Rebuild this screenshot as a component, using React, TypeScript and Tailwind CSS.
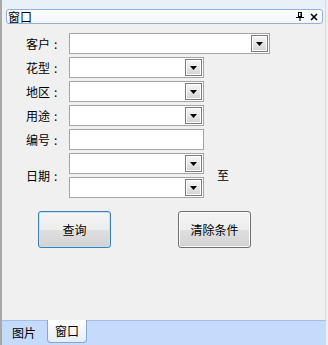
import React from "react";

const FONT = "font-['Noto_Sans_CJK_SC','Noto_Sans',sans-serif]";

function Arrow() {
  return (
    <div className="w-[17px] h-full border border-[#7c7c7c] shadow-[inset_0_0_0_1px_#ffffff] bg-[linear-gradient(180deg,#f7f7f7_0%,#e6e6e6_50%,#d3d3d3_100%)] flex items-center justify-center">
      <svg width="7" height="4" viewBox="0 0 7 4" className="mt-[1px]">
        <path d="M0 0H7L3.5 4Z" fill="#000" />
      </svg>
    </div>
  );
}

function Combo({ className, arrow = true }: { className: string; arrow?: boolean }) {
  return (
    <div className={`h-[21px] border border-[#a5a5a5] bg-white p-[1px] flex justify-end ${className}`}>
      {arrow && <Arrow />}
    </div>
  );
}

function Label({ text }: { text: string }) {
  return (
    <div className="w-[43px] pl-[24px] box-content text-[12px] leading-[14px] text-black whitespace-nowrap">
      {text}
      <span className="ml-[4px]">:</span>
    </div>
  );
}

function Row({ label, children }: { label: string; children: React.ReactNode }) {
  return (
    <div className="flex items-center">
      <Label text={label} />
      {children}
    </div>
  );
}

export default function App() {
  return (
    <div className={`w-[328px] h-[345px] flex flex-col bg-[#f0f0f0] border-l-2 border-[#a8a8a8] ${FONT}`}>
      <div className="flex-1 flex flex-col border-r border-[#d8d8d8] mr-[2px]">
        <div className="h-[9px] bg-[#eaf0f8]" />
        <div className="h-[15px] ml-[4px] mr-[2px] border border-[#8fb1dc] rounded-[3px] bg-[linear-gradient(180deg,#ffffff_0%,#f1f6fc_100%)] flex items-center pl-[1px] pr-[4px]">
          <span className="text-[12px] leading-[13px] text-black">窗口</span>
          <div className="flex-1" />
          <svg width="8" height="9" viewBox="0 0 8 9" className="mr-[6px]">
            <rect x="2.5" y="0.5" width="3" height="4" fill="none" stroke="#000" />
            <rect x="4.5" y="0" width="1.5" height="5" fill="#000" />
            <rect x="0" y="5" width="8" height="1" fill="#000" />
            <rect x="3.5" y="6" width="1" height="3" fill="#000" />
          </svg>
          <svg width="8" height="8" viewBox="0 0 8 8">
            <path d="M1 1L7 7M7 1L1 7" stroke="#000" strokeWidth="1.6" />
          </svg>
        </div>
        <div className="flex flex-col gap-[3px] pt-[9px]">
          <Row label="客户">
            <Combo className="w-[201px]" />
          </Row>
          <Row label="花型">
            <Combo className="w-[135px]" />
          </Row>
          <Row label="地区">
            <Combo className="w-[135px]" />
          </Row>
          <Row label="用途">
            <Combo className="w-[135px]" />
          </Row>
          <Row label="编号">
            <Combo className="w-[135px]" arrow={false} />
          </Row>
          <Row label="日期">
            <div className="flex flex-col gap-[3px]">
              <Combo className="w-[135px]" />
              <Combo className="w-[135px]" />
            </div>
            <span className="ml-[13px] text-[12px] leading-[14px] text-black -mt-[2px]">至</span>
          </Row>
        </div>
        <div className="flex pl-[36px] pt-[13px] gap-[67px]">
          <button className="w-[73px] h-[37px] rounded-[3px] border border-[#3c7fb1] shadow-[inset_0_0_0_1px_#bfe4fa] bg-[linear-gradient(180deg,#f4f4f4_0%,#ededed_50%,#e0e0e0_51%,#d2d2d2_100%)] text-[12px] text-black">
            查询
          </button>
          <button className="w-[73px] h-[37px] rounded-[3px] border border-[#707070] shadow-[inset_0_0_0_1px_#fbfbfb] bg-[linear-gradient(180deg,#f4f4f4_0%,#ededed_50%,#e0e0e0_51%,#d2d2d2_100%)] text-[12px] text-black">
            清除条件
          </button>
        </div>
      </div>
      <div className="h-[25px] bg-[#c4dbfb] border-t border-[#a3bfe6] flex items-start mr-[2px]">
        <div className="w-[45px] h-[23px] flex items-center pl-[10px] text-[12px] leading-[14px] text-black">
          图片
        </div>
        <div className="-mt-px w-[40px] h-[23px] border-x border-b border-[#8aa6cb] rounded-b-[4px] bg-[linear-gradient(180deg,#ffffff_0%,#e4edf8_100%)] flex items-center justify-center text-[12px] leading-[14px] text-black">
          窗口
        </div>
      </div>
    </div>
  );
}
